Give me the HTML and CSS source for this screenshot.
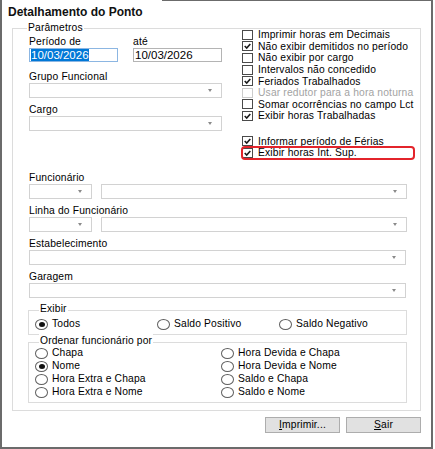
FILE: index.html
```html
<!DOCTYPE html>
<html lang="pt-BR">
<head>
    <title>Detalhamento do Ponto</title>
    <link rel="stylesheet" href="styles.css">
</head>
<body>
<div class="window">
    <div class="top-edge"></div>
    <div class="title">Detalhamento do Ponto</div>

    <div class="group params">
        <span class="group-title">Parâmetros</span>

        <div class="top-area">
            <!-- Left column: period and combos -->
            <div class="left-col">
                <div class="dates">
                    <div class="date-field">
                        <label>Período de</label>
                        <div class="text-input focused"><span class="sel">10/03/2026</span></div>
                    </div>
                    <div class="date-field">
                        <label>até</label>
                        <div class="text-input">10/03/2026</div>
                    </div>
                </div>
                <div class="field grupo">
                    <label>Grupo Funcional</label>
                    <div class="combo"></div>
                </div>
                <div class="field cargo">
                    <label>Cargo</label>
                    <div class="combo"></div>
                </div>
            </div>

            <!-- Right column: options -->
            <div class="checks">
                <div class="check"><span class="box"></span>Imprimir horas em Decimais</div>
                <div class="check"><span class="box checked"><svg viewBox="0 0 11 10"><path d="M2 5 L4.5 7.5 L9 2.5"/></svg></span>Não exibir demitidos no período</div>
                <div class="check"><span class="box"></span>Não exibir por cargo</div>
                <div class="check"><span class="box"></span>Intervalos não concedido</div>
                <div class="check"><span class="box checked"><svg viewBox="0 0 11 10"><path d="M2 5 L4.5 7.5 L9 2.5"/></svg></span>Feriados Trabalhados</div>
                <div class="check disabled"><span class="box"></span>Usar redutor para a hora noturna</div>
                <div class="check"><span class="box"></span>Somar ocorrências no campo Lct</div>
                <div class="check"><span class="box checked"><svg viewBox="0 0 11 10"><path d="M2 5 L4.5 7.5 L9 2.5"/></svg></span>Exibir horas Trabalhadas</div>

                <div class="check spaced"><span class="box checked"><svg viewBox="0 0 11 10"><path d="M2 5 L4.5 7.5 L9 2.5"/></svg></span>Informar período de Férias</div>
                <div class="check marked"><span class="box checked"><svg viewBox="0 0 11 10"><path d="M2 5 L4.5 7.5 L9 2.5"/></svg></span>Exibir horas Int. Sup.</div>
            </div>
        </div>

        <div class="bottom-area">
            <div class="field">
                <label>Funcionário</label>
                <div class="combo-row">
                    <div class="combo small"></div>
                    <div class="combo wide"></div>
                </div>
            </div>
            <div class="field">
                <label>Linha do Funcionário</label>
                <div class="combo-row">
                    <div class="combo small"></div>
                    <div class="combo wide"></div>
                </div>
            </div>
            <div class="field">
                <label>Estabelecimento</label>
                <div class="combo full"></div>
            </div>
            <div class="field">
                <label>Garagem</label>
                <div class="combo full"></div>
            </div>

            <div class="group box exibir">
                <span class="group-title">Exibir</span>
                <div class="radios three">
                    <div class="radio"><span class="dot on"></span>Todos</div>
                    <div class="radio"><span class="dot"></span>Saldo Positivo</div>
                    <div class="radio"><span class="dot"></span>Saldo Negativo</div>
                </div>
            </div>

            <div class="group box ordenar">
                <span class="group-title">Ordenar funcionário por</span>
                <div class="radios two">
                    <div class="radio"><span class="dot"></span>Chapa</div>
                    <div class="radio"><span class="dot on"></span>Nome</div>
                    <div class="radio"><span class="dot"></span>Hora Extra e Chapa</div>
                    <div class="radio"><span class="dot"></span>Hora Extra e Nome</div>
                    <div class="radio"><span class="dot"></span>Hora Devida e Chapa</div>
                    <div class="radio"><span class="dot"></span>Hora Devida e Nome</div>
                    <div class="radio"><span class="dot"></span>Saldo e Chapa</div>
                    <div class="radio"><span class="dot"></span>Saldo e Nome</div>
                </div>
            </div>
        </div>
    </div>

    <div class="buttons">
        <button><u>I</u>mprimir...</button>
        <button><u>S</u>air</button>
    </div>
</div>
</body>
</html>
```

FILE: styles.css
```css
body {
    margin: 0;
    background: #fff;
    font-family: "Liberation Sans", Arial, sans-serif;
    font-size: 10.3px;
    letter-spacing: 0.15px;
    color: #000;
}

.window {
    width: 433px;
    height: 449px;
    box-sizing: border-box;
    border-left: 2px solid #6b6b6b;
    border-right: 2px solid #6b6b6b;
    border-bottom: 2px solid #6b6b6b;
    background: #fff;
}

.top-edge {
    margin-left: 160px;
    border-top: 1px solid #6b6b6b;
}

.title {
    padding: 3px 0 0 6px;
    line-height: 16px;
    font-size: 12px;
    font-weight: bold;
    letter-spacing: 0;
    color: #111;
}

/* group boxes */
.group {
    position: relative;
    box-sizing: border-box;
    border: 1px solid #dcdcdc;
}

.group-title {
    position: absolute;
    top: -8.5px;
    left: 10px;
    padding: 0 1px;
    line-height: 13px;
    background: #fff;
}

.params {
    margin: 8px 0 0 10px;
    width: 409px;
    height: 383px;
    padding-left: 16px;
}

.params > .group-title {
    left: 14px;
}

label {
    display: block;
    line-height: 13px;
}

.top-area {
    display: grid;
    grid-template-columns: 213px 1fr;
}

.dates {
    display: flex;
    gap: 15px;
    margin-top: 6px;
}

.date-field {
    width: 89px;
}

.text-input {
    height: 14px;
    box-sizing: border-box;
    border: 1px solid #b4b4b4;
    padding-left: 1px;
    font-size: 11.5px;
    letter-spacing: 0;
    line-height: 12px;
}

.text-input.focused {
    border-color: #8cb6e2;
}

.sel {
    background: #0078d7;
    color: #fff;
}

.combo {
    display: flex;
    align-items: center;
    justify-content: flex-end;
    height: 15px;
    box-sizing: border-box;
    border: 1px solid #d2d2d2;
    padding-right: 9px;
    width: 193px;
}

.combo:after {
    content: '';
    width: 0;
    height: 0;
    border-left: 2.5px solid transparent;
    border-right: 2.5px solid transparent;
    border-top: 3px solid #8a8a8a;
}

.grupo {
    margin-top: 8px;
}

.cargo {
    margin-top: 1.5px;
}

/* checkboxes */
.check {
    position: relative;
    display: flex;
    align-items: center;
    height: 11.6px;
    width: 172px;
    white-space: nowrap;
}

.check.spaced {
    margin-top: 13.7px;
}

.box {
    display: flex;
    width: 11px;
    height: 10px;
    box-sizing: border-box;
    border: 1px solid #4a4a4a;
    margin-right: 5px;
    background: #fff;
    flex: none;
}

.box svg {
    width: 100%;
    height: 100%;
    overflow: visible;
}

.box path {
    fill: none;
    stroke: #1c1c1c;
    stroke-width: 2;
}

.check.disabled {
    color: #a3a3a3;
}

.check.disabled .box {
    border-color: #cccccc;
}

.check.marked:after {
    content: '';
    position: absolute;
    top: -1px;
    left: -1px;
    right: -1px;
    bottom: -1px;
    border: 2px solid #e3242b;
    border-radius: 4px;
}

/* lower part */
.bottom-area {
    margin-top: 12.3px;
}

.field + .field {
    margin-top: 5px;
}

.combo-row {
    display: flex;
    gap: 9px;
}

.combo.small {
    width: 63px;
}

.combo.wide {
    width: 306px;
}

.combo.full {
    width: 377px;
}

.box.exibir,
.box.ordenar {
    margin-left: -1px;
    width: 379px;
    border: 1px solid #dcdcdc;
    padding-left: 6px;
}

.exibir {
    margin-top: 12px;
    height: 25px;
    padding-top: 5px;
}

.ordenar {
    margin-top: 7px;
    height: 61px;
    padding-top: 4px;
}

.radios {
    display: grid;
}

.radios.three {
    grid-template-columns: 122px 122px 1fr;
}

.radios.two {
    grid-auto-flow: column;
    grid-template-columns: 186px 1fr;
    grid-template-rows: repeat(4, 12.9px);
}

.radio {
    display: flex;
    align-items: center;
    line-height: 12.9px;
    white-space: nowrap;
}

.dot {
    display: flex;
    align-items: center;
    justify-content: center;
    width: 13px;
    height: 11px;
    box-sizing: border-box;
    border: 1px solid #5f5f5f;
    border-radius: 50%;
    margin-right: 4px;
    flex: none;
}

.dot.on:after {
    content: '';
    width: 6px;
    height: 5px;
    border-radius: 50%;
    background: #111;
}

/* buttons */
.buttons {
    display: flex;
    justify-content: flex-end;
    gap: 6px;
    margin-top: 6px;
    padding-right: 10px;
}

button {
    width: 75px;
    height: 16px;
    padding: 0;
    border: 1px solid #adadad;
    background: #e1e1e1;
    font-family: "Liberation Sans", Arial, sans-serif;
    font-size: 10.3px;
    letter-spacing: 0.15px;
    line-height: 14px;
    color: #000;
}
```
